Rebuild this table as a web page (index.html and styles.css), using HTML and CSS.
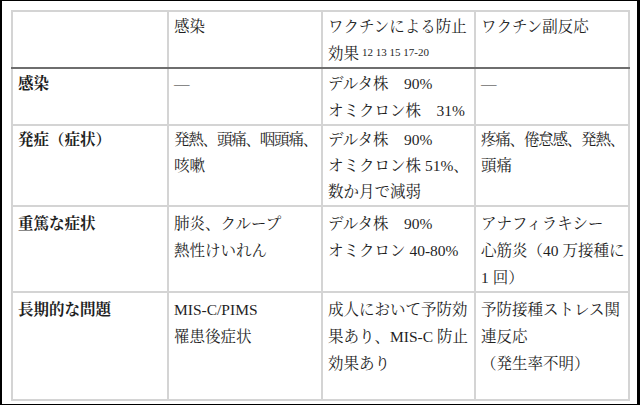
FILE: index.html
```html
<!DOCTYPE html>
<html lang="ja">
<head>
<meta charset="utf-8">
<link rel="stylesheet" href="styles.css">
</head>
<body>
<div class="frame">
  <table class="grid">
    <colgroup>
      <col class="c1"><col class="c2"><col class="c3"><col class="c4">
    </colgroup>
    <thead>
      <tr class="r0">
        <th></th>
        <th>感染</th>
        <th>ワクチンによる防止効果<sup class="refs">12 13 15 17-20</sup></th>
        <th>ワクチン副反応</th>
      </tr>
    </thead>
    <tbody>
      <tr class="r1">
        <th>感染</th>
        <td>—</td>
        <td>デルタ株　90%<br>オミクロン株　31%</td>
        <td>—</td>
      </tr>
      <tr class="r2">
        <th>発症（症状）</th>
        <td><span class="nw">発熱、頭痛、咽頭痛、</span><br>咳嗽</td>
        <td>デルタ株　90%<br>オミクロン株 51%、数か月で減弱</td>
        <td><span class="nw">疼痛、倦怠感、発熱、</span><br>頭痛</td>
      </tr>
      <tr class="r3">
        <th>重篤な症状</th>
        <td>肺炎、クループ<br>熱性けいれん</td>
        <td>デルタ株　90%<br>オミクロン 40-80%</td>
        <td>アナフィラキシー<br>心筋炎（40 万接種に1&nbsp;回）</td>
      </tr>
      <tr class="r4">
        <th>長期的な問題</th>
        <td>MIS-C/PIMS<br>罹患後症状</td>
        <td>成人において予防効果あり、MIS-C 防止効果あり</td>
        <td>予防接種ストレス関連反応<br>（発生率不明）</td>
      </tr>
    </tbody>
  </table>
</div>
</body>
</html>
```
FILE: styles.css
```css
html, body {
  margin: 0;
  padding: 0;
  background: #ffffff;
}

.frame {
  width: 640px;
  height: 405px;
  box-sizing: border-box;
  border-style: solid;
  border-color: #000000;
  border-width: 1px 3px 1px 2px;
  padding: 9px 0 0 9px;
  background: #ffffff;
  font-family: "Liberation Serif", "Noto Serif CJK JP", "Noto Sans CJK JP", serif;
  font-size: 15.5px;
  color: #1f1f1f;
}

.grid {
  border-collapse: collapse;
  table-layout: fixed;
  width: 617px;
}

.c1 { width: 156px; }
.c2 { width: 154px; }
.c3 { width: 153px; }
.c4 { width: 154px; }

.grid th,
.grid td {
  border: 2px solid #d4d4d4;
  padding: 1px 1px 0 5px;
  line-height: 27px;
  vertical-align: top;
  text-align: left;
  font-weight: normal;
}

.grid thead th {
  border-bottom: 2px solid #6e6e6e;
}

.grid tbody th {
  font-weight: bold;
}

.r0 { height: 56px; }
.r1 { height: 55px; }
.r2 { height: 79px; }
.r3 { height: 85px; }
.r4 { height: 108px; }

.r2 th,
.r2 td {
  line-height: 26px;
}

.r3 th,
.r3 td,
.r4 th,
.r4 td {
  padding-top: 3px;
}

.nw {
  white-space: nowrap;
  letter-spacing: -1.2px;
}

.refs {
  font-size: 11px;
  line-height: 0;
  vertical-align: 3px;
  margin-left: 3px;
}
```
